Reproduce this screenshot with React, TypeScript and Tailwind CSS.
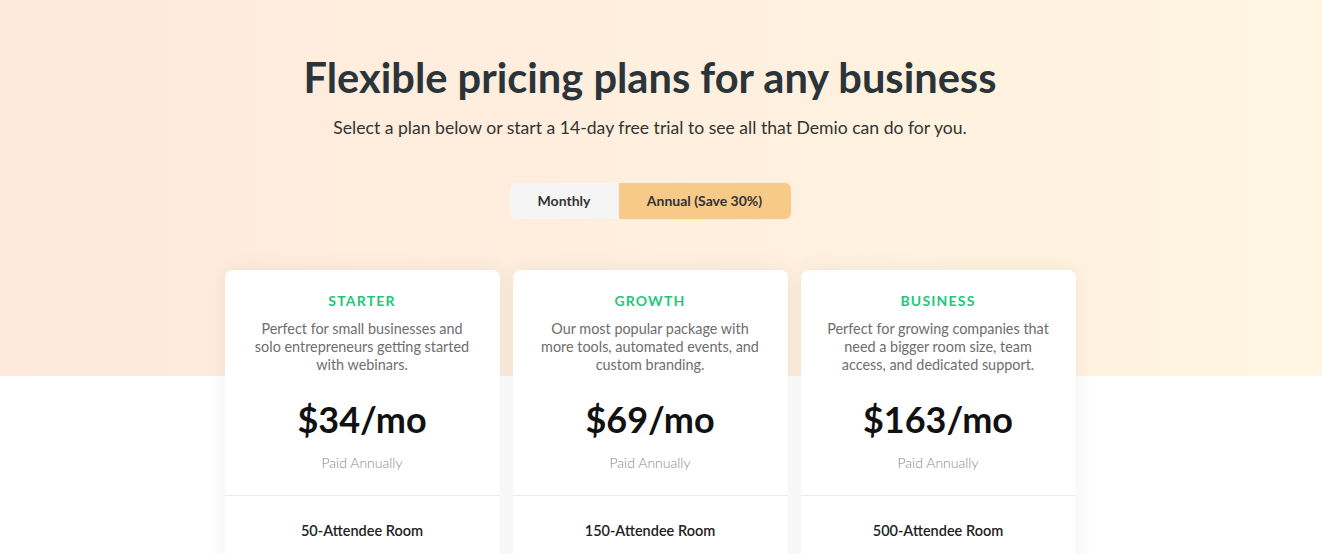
const plans = [
  {
    name: "STARTER",
    desc: "Perfect for small businesses and solo entrepreneurs getting started with webinars.",
    price: "$34/mo",
    room: "50-Attendee Room",
  },
  {
    name: "GROWTH",
    desc: "Our most popular package with more tools, automated events, and custom branding.",
    price: "$69/mo",
    room: "150-Attendee Room",
  },
  {
    name: "BUSINESS",
    desc: "Perfect for growing companies that need a bigger room size, team access, and dedicated support.",
    price: "$163/mo",
    room: "500-Attendee Room",
  },
];

export default function App() {
  return (
    <div
      className="min-h-screen w-full bg-white bg-[linear-gradient(to_right,#fee9dc,#fff5e0)] bg-[length:100%_376px] bg-no-repeat"
      style={{ fontFamily: "Lato, 'Open Sans', sans-serif" }}
    >
      <div className="w-[1300px] flex flex-col items-center pt-[52px]">
        <h1 className="text-[41.6px] leading-[50px] font-bold text-[#2a3439]">
          Flexible pricing plans for any business
        </h1>
        <p className="mt-[14px] text-[17.6px] leading-6 text-[#333]">
          Select a plan below or start a 14-day free trial to see all that Demio can do for you.
        </p>

        <div className="mt-[43px] flex h-9 rounded-md overflow-hidden text-sm font-bold text-[#333]">
          <button className="w-[109px] bg-[#f5f5f5]">Monthly</button>
          <button className="w-[172px] bg-[#f7ca88]">Annual (Save 30%)</button>
        </div>

        <div className="mt-[51px] flex gap-[13px] items-start">
          {plans.map((p) => (
            <div
              key={p.name}
              className="w-[275px] h-[320px] bg-white rounded-lg shadow-[0_0_22px_rgba(0,0,0,0.06)] flex flex-col"
            >
              <div className="px-6 pt-[23px] pb-[23px] flex flex-col items-center text-center border-b border-[#ebebeb]">
                <div className="text-sm leading-4 font-bold tracking-[1.2px] text-[#1ec77a]">{p.name}</div>
                <p className="mt-[11px] text-[14.4px] leading-[18px] text-[#6e6e6e]">{p.desc}</p>
                <div className="mt-[23px] text-[36px] leading-[44px] font-bold text-[#111]">{p.price}</div>
                <div className="mt-[13px] text-sm leading-[18px] font-light text-[#8a8a8a]">Paid Annually</div>
              </div>
              <div className="pt-[26px] text-center text-[14.5px] leading-[18px] font-semibold text-[#222]">
                {p.room}
              </div>
            </div>
          ))}
        </div>
      </div>
    </div>
  );
}
